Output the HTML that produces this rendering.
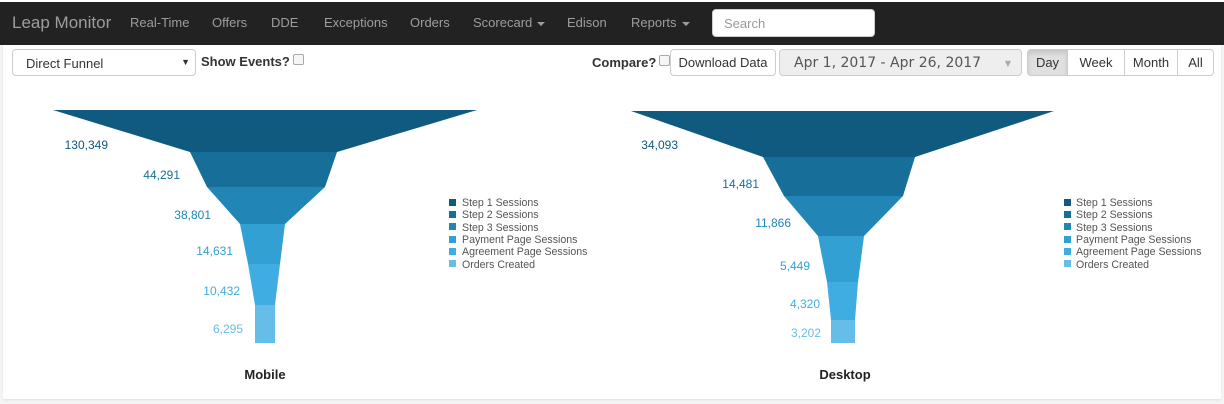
<!DOCTYPE html>
<html><head><style>
body{margin:0;width:1224px;height:404px;background:#f4f4f4;font-family:"Liberation Sans",Arial,sans-serif;position:relative;overflow:hidden}
.nav{position:absolute;left:0;top:0;width:1224px;height:45px;background:#222;border-top:2px solid #fff;box-sizing:border-box}
.nav span{position:absolute;top:13px;font-size:13px;color:#9d9d9d}
.brand{font-size:17px!important;top:11px!important;left:12px}
.caret{display:inline-block;width:0;height:0;border-left:4px solid transparent;border-right:4px solid transparent;border-top:4px solid #9d9d9d;vertical-align:middle;margin-left:5px}
.search{position:absolute;left:712px;top:7px;width:163px;height:28px;background:#fff;border-radius:4px;border:1px solid #ccc;box-sizing:border-box;font-size:13px;color:#999;padding:6px 11px}
.card{position:absolute;left:3px;top:45px;width:1218px;height:354px;background:#fff;box-shadow:0 1px 2px rgba(0,0,0,.08)}
.abs{position:absolute}
.sel{left:12px;top:49px;width:184px;height:27px;border:1px solid #ccc;border-radius:4px;box-sizing:border-box;font-size:13px;color:#333;padding:6px 13px}
.lbl{font-size:13px;font-weight:bold;color:#333}
.cb{display:inline-block;width:9px;height:9px;border:1px solid #aaa;border-radius:2px;background:#f6f6f6;vertical-align:1px;margin-left:3px}
.btn{border:1px solid #ccc;box-sizing:border-box;height:27px;top:49px;font-size:13px;color:#333;text-align:center;line-height:25px;background:#fff}
</style></head><body>
<div class="nav">
<span class="brand">Leap Monitor</span>
<span style="left:130px">Real-Time</span>
<span style="left:212px">Offers</span>
<span style="left:271px">DDE</span>
<span style="left:324px">Exceptions</span>
<span style="left:410px">Orders</span>
<span style="left:473px">Scorecard<i class="caret"></i></span>
<span style="left:567px">Edison</span>
<span style="left:631px">Reports<i class="caret"></i></span>
<div class="search">Search</div>
</div>
<div class="card"></div>
<div class="abs sel">Direct Funnel<span style="position:absolute;right:5px;top:7px;font-size:9px">▼</span></div>
<div class="abs lbl" style="left:201px;top:54px">Show Events?<i class="cb"></i></div>
<div class="abs lbl" style="left:592px;top:55px">Compare?<i class="cb"></i></div>
<div class="abs btn" style="left:670px;width:106px;border-radius:4px">Download Data</div>
<div class="abs btn" style="left:779px;width:243px;border-radius:4px;background:#eee;font-family:'DejaVu Sans',sans-serif;font-size:14px;color:#555;text-align:left;padding-left:14px;line-height:27px">Apr 1, 2017 - Apr 26, 2017<span style="position:absolute;right:10px;top:0;font-size:8px;color:#aaa">▼</span></div>
<div class="abs btn" style="left:1027px;width:41px;background:#e0e0e0;border-radius:4px 0 0 4px;box-shadow:inset 0 3px 5px rgba(0,0,0,.12)">Day</div>
<div class="abs btn" style="left:1067px;width:58px">Week</div>
<div class="abs btn" style="left:1124px;width:54px">Month</div>
<div class="abs btn" style="left:1177px;width:37px;border-radius:0 4px 4px 0">All</div>

<svg class="abs" style="left:0;top:0" width="1224" height="404" font-family="Liberation Sans, Arial, sans-serif">
<g>
<polygon points="53,110 477,110 337,152 190,152" fill="#0f5a7e"/>
<polygon points="190,152 337,152 325,187 207,187" fill="#176e98"/>
<polygon points="207,187 325,187 285,224 240,224" fill="#2185b6"/>
<polygon points="240,224 285,224 280,264 248,264" fill="#33a0d4"/>
<polygon points="248,264 280,264 275,305 255,305" fill="#40ade2"/>
<polygon points="255,305 275,305 275,343 255,343" fill="#66bde8"/>
</g>
<g font-size="12" text-anchor="end">
<text x="108" y="149" fill="#0f5a7e">130,349</text>
<text x="180" y="179" fill="#176e98">44,291</text>
<text x="211" y="219" fill="#2185b6">38,801</text>
<text x="233" y="255" fill="#33a0d4">14,631</text>
<text x="240" y="295" fill="#40ade2">10,432</text>
<text x="243" y="333" fill="#66bde8">6,295</text>
</g>
<g>
<polygon points="631,111 1054,111 915,157 763,157" fill="#0f5a7e"/>
<polygon points="763,157 915,157 903,196 784,196" fill="#176e98"/>
<polygon points="784,196 903,196 864,236 818,236" fill="#2185b6"/>
<polygon points="818,236 864,236 858,282 827,282" fill="#33a0d4"/>
<polygon points="827,282 858,282 855,320 831,320" fill="#40ade2"/>
<polygon points="831,320 855,320 855,343 831,343" fill="#66bde8"/>
</g>
<g font-size="12" text-anchor="end">
<text x="678" y="149" fill="#0f5a7e">34,093</text>
<text x="759" y="188" fill="#176e98">14,481</text>
<text x="791" y="227" fill="#2185b6">11,866</text>
<text x="810" y="270" fill="#33a0d4">5,449</text>
<text x="820" y="308" fill="#40ade2">4,320</text>
<text x="821" y="337" fill="#66bde8">3,202</text>
</g>
<g font-size="10.6" fill="#555">
<rect x="449" y="199" width="7" height="7" fill="#0f5a7e"/><text x="462" y="206">Step 1 Sessions</text>
<rect x="449" y="211" width="7" height="7" fill="#176e98"/><text x="462" y="218">Step 2 Sessions</text>
<rect x="449" y="223" width="7" height="7" fill="#2185b6"/><text x="462" y="231">Step 3 Sessions</text>
<rect x="449" y="236" width="7" height="7" fill="#33a0d4"/><text x="462" y="243">Payment Page Sessions</text>
<rect x="449" y="248" width="7" height="7" fill="#40ade2"/><text x="462" y="255">Agreement Page Sessions</text>
<rect x="449" y="260" width="7" height="7" fill="#66bde8"/><text x="462" y="268">Orders Created</text>
<rect x="1064" y="199" width="7" height="7" fill="#0f5a7e"/><text x="1076" y="206">Step 1 Sessions</text>
<rect x="1064" y="211" width="7" height="7" fill="#176e98"/><text x="1076" y="218">Step 2 Sessions</text>
<rect x="1064" y="223" width="7" height="7" fill="#2185b6"/><text x="1076" y="231">Step 3 Sessions</text>
<rect x="1064" y="236" width="7" height="7" fill="#33a0d4"/><text x="1076" y="243">Payment Page Sessions</text>
<rect x="1064" y="248" width="7" height="7" fill="#40ade2"/><text x="1076" y="255">Agreement Page Sessions</text>
<rect x="1064" y="260" width="7" height="7" fill="#66bde8"/><text x="1076" y="268">Orders Created</text>
</g>
<g font-size="13" font-weight="bold" fill="#222" text-anchor="middle">
<text x="265" y="379">Mobile</text>
<text x="845" y="379">Desktop</text>
</g>
</svg>
</body></html>
